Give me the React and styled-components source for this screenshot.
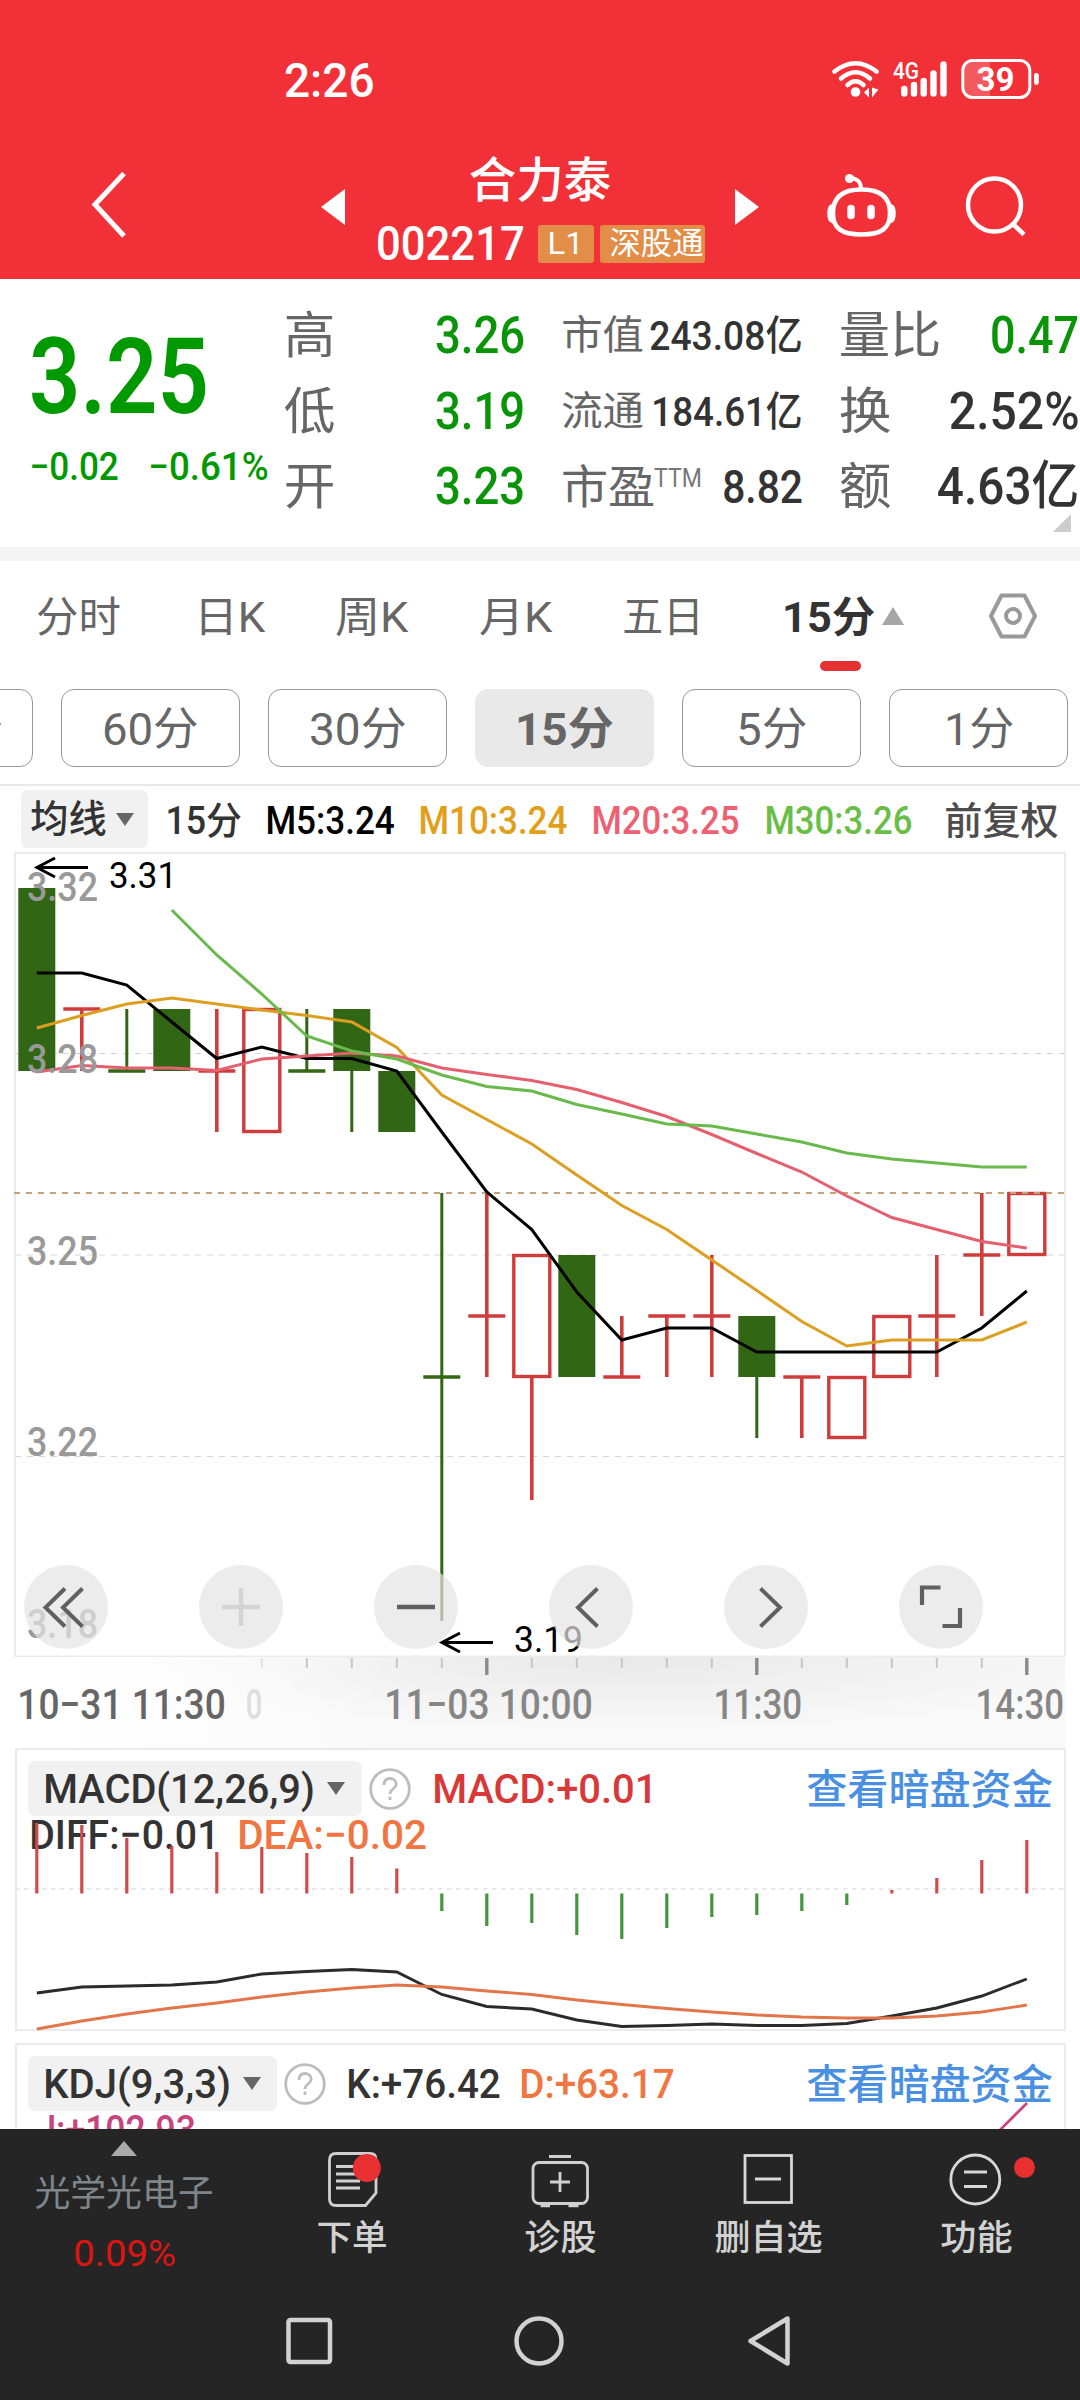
import React, { useLayoutEffect, useRef } from 'react';
import styled, { createGlobalStyle } from 'styled-components';

const GREEN = '#099409';
const INK = '#333';
const BLUE = '#4a90e2';

const STEP = 45;
const FIRST = 36.8;
const cx = (i) => FIRST + STEP * i;

// type, body top, body bottom, high, low
const candles = [
    ['down', 888, 1071, 888, 1071],
    ['up', 1009, 1009, 1009, 1071],
    ['down', 1071, 1071, 1009, 1071],
    ['down', 1009, 1071, 1009, 1071],
    ['up', 1071, 1071, 1009, 1132],
    ['up', 1009, 1132, 1009, 1132],
    ['down', 1071, 1071, 1009, 1071],
    ['down', 1009, 1071, 1009, 1132],
    ['down', 1071, 1132, 1071, 1132],
    ['down', 1377, 1377, 1193, 1621],
    ['up', 1316, 1316, 1193, 1377],
    ['up', 1255, 1377, 1255, 1500],
    ['down', 1255, 1377, 1255, 1377],
    ['up', 1377, 1377, 1316, 1377],
    ['up', 1316, 1316, 1316, 1377],
    ['up', 1316, 1316, 1255, 1377],
    ['down', 1316, 1377, 1316, 1438],
    ['up', 1377, 1377, 1377, 1438],
    ['up', 1377, 1438, 1377, 1438],
    ['up', 1316, 1377, 1316, 1377],
    ['up', 1316, 1316, 1255, 1377],
    ['up', 1255, 1255, 1193, 1316],
    ['up', 1193, 1255, 1193, 1255],
];

const averages = [
    {
        color: '#000',
        start: 0,
        data: [
            973, 973, 985, 1022, 1058.5, 1047, 1058.5, 1058.5, 1071, 1132, 1192, 1229.5, 1292, 1340, 1328, 1328, 1352,
            1352, 1352, 1352, 1352, 1328, 1291,
        ],
    },
    {
        color: '#dc9f22',
        start: 0,
        data: [
            1028, 1015.5, 1004, 998, 1004, 1010, 1015.5, 1022, 1047.5, 1095, 1119.5, 1144, 1175, 1205.5, 1229.5, 1260,
            1290.5, 1321.5, 1346, 1340, 1340, 1340, 1322,
        ],
    },
    {
        color: '#e5606f',
        start: 0,
        data: [
            1072, 1065.5, 1068, 1068, 1070.5, 1059, 1056, 1053, 1056, 1068, 1074.5, 1080.5, 1089.5, 1102.5, 1116.5,
            1134.5, 1153.5, 1172, 1196, 1217.5, 1229.5, 1241.5, 1248,
        ],
    },
    {
        color: '#6ab94c',
        start: 3,
        data: [
            910, 955, 994, 1036, 1051, 1059, 1075, 1086.5, 1091, 1104.5, 1114, 1124, 1126, 1134, 1142, 1153, 1159,
            1163, 1167, 1167,
        ],
    },
];

const macdBars = [
    1823, 1825, 1838, 1846, 1852, 1847, 1853, 1857, 1868.5, 1911, 1926, 1923, 1935, 1939, 1928, 1917, 1915, 1911, 1905,
    1890, 1878, 1860, 1840,
];
const diff = [
    1993, 1987, 1986, 1985, 1982, 1974, 1971.5, 1969.5, 1972, 1994.5, 2006.5, 2009, 2020, 2026.5, 2025.5, 2024,
    2025.5, 2025.5, 2023.5, 2016, 2008, 1996, 1979,
];
const dea = [
    2029, 2021, 2014, 2008, 2003, 1997, 1992, 1988, 1985, 1987, 1991, 1994.5, 2000, 2004.5, 2008.5, 2012, 2015, 2017,
    2018, 2018, 2016, 2012, 2005,
];

const toPoints = (data, start = 0) => data.map((y, i) => `${cx(i + start)},${y}`).join(' ');

// squeezes a line of text so that its ink is exactly `w` wide
function Fit({ w, className, children }) {
    const ref = useRef(null);

    useLayoutEffect(() => {
        const el = ref.current;
        const bearing = parseFloat(getComputedStyle(el).fontSize) * 0.045;
        const scale = w / (el.offsetWidth - bearing * 2);
        el.style.transform = `translateX(${-bearing * scale}px) scaleX(${scale})`;
    }, [w, children]);

    return (
        <FitBox className={className} $w={w}>
            <FitInner ref={ref}>{children}</FitInner>
        </FitBox>
    );
}

export default function App() {
    return (
        <Screen>
            <GlobalStyle />
            <Header />
            <Quote />
            <PeriodTabs />
            <MinuteChips />
            <Legend />
            <CandleChart />
            <TimeAxis />
            <MacdPanel />
            <KdjPanel />
            <BottomBar />
        </Screen>
    );
}

function Header() {
    return (
        <HeaderView>
            <StatusBar>
                <Clock w={87}>2:26</Clock>
                <StatusIcons />
            </StatusBar>
            <NavBar>
                <BackIcon width="36" height="66" viewBox="0 0 36 66">
                    <path d="M33 1.5L4 32.5L33 64" fill="none" stroke="#fff" strokeWidth="5" />
                </BackIcon>
                <PrevIcon width="24" height="36" viewBox="0 0 24 36">
                    <path d="M24 0V36L0 18Z" fill="#fff" />
                </PrevIcon>
                <TitleBlock>
                    <StockName w={138}>合力泰</StockName>
                    <CodeRow>
                        <StockCode w={145}>002217</StockCode>
                        <Badge $w={56} $gap={15}>
                            <BadgeText w={33}>L1</BadgeText>
                        </Badge>
                        <Badge $w={105} $gap={6}>
                            <BadgeText w={91}>深股通</BadgeText>
                        </Badge>
                    </CodeRow>
                </TitleBlock>
                <NextIcon width="24" height="36" viewBox="0 0 24 36">
                    <path d="M0 0V36L24 18Z" fill="#fff" />
                </NextIcon>
                <RobotIcon width="72" height="66" viewBox="825 172 72 66" fill="none" stroke="#fff">
                    <path
                        d="M861.5 189.5c20 0 28.500 8.500 28.500 23.500c0 15-8 21.500-28.500 21.500s-28.500-6.500-28.500-21.500c0-15 8.500-23.500 28.500-23.500z"
                        strokeWidth="4.500"
                    />
                    <path d="M861 189c0-7-3-10-10-11" strokeWidth="4" />
                    <circle cx="849.500" cy="178.500" r="4.500" fill="#fff" stroke="none" />
                    <path d="M851 208.500v7M871 208.500v7" strokeWidth="7.500" strokeLinecap="round" />
                    <path d="M832 205c-5 1-5 16 0 17zM891 205c5 1 5 16 0 17z" fill="#fff" strokeWidth="2" />
                </RobotIcon>
                <SearchIcon width="62" height="62" viewBox="965 175 62 62" fill="none" stroke="#fff" strokeWidth="4.500">
                    <circle cx="994.500" cy="205" r="26.500" />
                    <path d="M1013 224L1024 234.500" />
                </SearchIcon>
            </NavBar>
        </HeaderView>
    );
}

function StatusIcons() {
    return (
        <StatusSvg width="212" height="44" viewBox="830 57 212 44">
            <g fill="none" stroke="#fff" strokeWidth="4.500" strokeLinecap="round">
                <path d="M834.500 71.500Q855.500 55 876.500 71.500" />
                <path d="M841 78.500Q855.500 66 870 78.500" />
                <path d="M847.500 85Q855.500 77.500 863.500 85" />
            </g>
            <circle cx="855.500" cy="92" r="4.800" fill="#fff" />
            <path d="M864 92.500l5-5v10zM872 87.500v10l6.500-8z" fill="#fff" />
            <SvgText x="893" y="79" fontSize="24" fontWeight="500" fill="#fff" textLength="26" lengthAdjust="spacingAndGlyphs">
                4G
            </SvgText>
            <g stroke="#fff" strokeWidth="6.400" strokeLinecap="round">
                <path d="M904.300 89v4.500M914 85v8.500M923.700 81v12.500M933.500 73.500v20M943.500 64.500v29" />
            </g>
            <path d="M974 62h16v34h-16q-10 0-10-10v-14q0-10 10-10z" fill="#fff" opacity="0.2" />
            <rect x="962.800" y="60.500" width="67" height="37" rx="10" fill="none" stroke="#fff" strokeWidth="3" />
            <rect x="1034" y="73" width="4.800" height="12" rx="2.400" fill="#fff" />
            <SvgText x="976.500" y="91" fontSize="34" fontWeight="700" fill="#fff" textLength="38" lengthAdjust="spacingAndGlyphs">
                39
            </SvgText>
        </StatusSvg>
    );
}

function Quote() {
    return (
        <QuoteView>
            <PriceBlock>
                <Price w={172}>3.25</Price>
                <ChangeRow>
                    <Change w={86}>−0.02</Change>
                    <Change w={117}>−0.61%</Change>
                </ChangeRow>
            </PriceBlock>

            <QuoteColumn $w={237}>
                {[
                    ['高', '3.26'],
                    ['低', '3.19'],
                    ['开', '3.23'],
                ].map(([label, value]) => (
                    <QuoteRow key={label}>
                        <QuoteLabel w={47}>{label}</QuoteLabel>
                        <QuoteValue w={86} $color={GREEN}>
                            {value}
                        </QuoteValue>
                    </QuoteRow>
                ))}
            </QuoteColumn>

            <QuoteColumn $w={238} $gap={40}>
                <QuoteRow>
                    <QuoteLabel w={79} $size={40}>
                        市值
                    </QuoteLabel>
                    <QuoteValue w={150} $size={41}>
                        243.08亿
                    </QuoteValue>
                </QuoteRow>
                <QuoteRow>
                    <QuoteLabel w={79} $size={40}>
                        流通
                    </QuoteLabel>
                    <QuoteValue w={148} $size={41}>
                        184.61亿
                    </QuoteValue>
                </QuoteRow>
                <QuoteRow>
                    <QuoteLabel w={90} $size={46}>
                        市盈
                    </QuoteLabel>
                    <Ttm w={46}>TTM</Ttm>
                    <QuoteValue w={77} $size={47}>
                        8.82
                    </QuoteValue>
                </QuoteRow>
            </QuoteColumn>

            <QuoteColumn $w={236} $gap={40}>
                <QuoteRow>
                    <QuoteLabel w={98}>量比</QuoteLabel>
                    <QuoteValue w={85} $color={GREEN}>
                        0.47
                    </QuoteValue>
                </QuoteRow>
                <QuoteRow>
                    <QuoteLabel w={48}>换</QuoteLabel>
                    <QuoteValue w={126}>2.52%</QuoteValue>
                </QuoteRow>
                <QuoteRow>
                    <QuoteLabel w={48}>额</QuoteLabel>
                    <QuoteValue w={138}>4.63亿</QuoteValue>
                </QuoteRow>
            </QuoteColumn>

            <CornerMark />
        </QuoteView>
    );
}

function PeriodTabs() {
    return (
        <TabsView>
            <Tab w={81}>分时</Tab>
            <Tab w={67} $gap={77}>
                日K
            </Tab>
            <Tab w={69} $gap={74}>
                周K
            </Tab>
            <Tab w={69} $gap={75}>
                月K
            </Tab>
            <Tab w={78} $gap={74}>
                五日
            </Tab>
            <ActiveTab>
                <Tab w={89} $active>
                    15分
                </Tab>
                <UpArrow />
                <Indicator />
            </ActiveTab>
            <SettingIcon width="52" height="48" viewBox="0 0 52 48" fill="none" stroke="#999" strokeWidth="4">
                <path d="M14.500 3.500h23L48 24L37.500 44.500h-23L4 24z" strokeLinejoin="round" />
                <circle cx="26" cy="24" r="7" />
            </SettingIcon>
        </TabsView>
    );
}

function MinuteChips() {
    return (
        <ChipsView>
            <Chip>
                <ChipText w={114}>120分</ChipText>
            </Chip>
            <Chip>
                <ChipText w={93}>60分</ChipText>
            </Chip>
            <Chip>
                <ChipText w={94}>30分</ChipText>
            </Chip>
            <Chip $active>
                <ChipText w={95} $active>
                    15分
                </ChipText>
            </Chip>
            <Chip>
                <ChipText w={67}>5分</ChipText>
            </Chip>
            <Chip>
                <ChipText w={66}>1分</ChipText>
            </Chip>
        </ChipsView>
    );
}

function Legend() {
    return (
        <LegendView>
            <LegendSelect>
                <LegendText w={73}>均线</LegendText>
                <DownArrow $gap={11} />
            </LegendSelect>
            <LegendText w={73} $gap={19}>
                15分
            </LegendText>
            <LegendText w={126} $gap={27} $color="#000">
                M5:3.24
            </LegendText>
            <LegendText w={146} $gap={27} $color="#e2a01a">
                M10:3.24
            </LegendText>
            <LegendText w={145} $gap={27} $color="#ee6072">
                M20:3.25
            </LegendText>
            <LegendText w={145} $gap={28} $color="#68be46">
                M30:3.26
            </LegendText>
            <LegendText w={111} $gap={35} $color="#4d4d4d">
                前复权
            </LegendText>
        </LegendView>
    );
}

function Candle({ index, type, top, bottom, high, low }) {
    const x = cx(index);
    const color = type === 'up' ? '#d03c3c' : '#306614';
    const wick = type === 'up' ? 3.6 : 3;

    return (
        <g stroke={color} fill={color}>
            {high < top && <path d={`M${x} ${high}V${top}`} strokeWidth={wick} />}
            {low > bottom && <path d={`M${x} ${bottom}V${low}`} strokeWidth={wick} />}
            {top === bottom && <path d={`M${x - 18.5} ${top}h37`} strokeWidth="3.600" />}
            {top !== bottom && type === 'down' && (
                <rect x={x - 18.5} y={top} width="37" height={bottom - top} stroke="none" />
            )}
            {top !== bottom && type === 'up' && (
                <rect x={x - 18} y={top + 0.5} width="36" height={bottom - top - 1} fill="none" strokeWidth="3.400" />
            )}
        </g>
    );
}

function CandleChart() {
    return (
        <ChartView>
            <ChartSvg width="1080" height="805" viewBox="0 852 1080 805">
                <g stroke="#d6d6d6" strokeDasharray="6 6">
                    <path d="M15 1053.500H1065M15 1456.500H1065" />
                    <path d="M15 1255H1065" stroke="#ebebeb" strokeWidth="2" />
                </g>
                <rect x="15" y="853" width="1050" height="803.500" fill="none" stroke="#ebebeb" strokeWidth="2" />
                {candles.map(([type, top, bottom, high, low], i) => (
                    <Candle key={i} index={i} type={type} top={top} bottom={bottom} high={high} low={low} />
                ))}
                <path d="M14 1193H1065" stroke="#c0a478" strokeWidth="2" strokeDasharray="6 6" />
                {averages.map(({ color, start, data }) => (
                    <polyline key={color} points={toPoints(data, start)} fill="none" stroke={color} strokeWidth="3" />
                ))}
                {[
                    ['3.32', 901],
                    ['3.28', 1073],
                    ['3.25', 1265],
                    ['3.22', 1456],
                    ['3.18', 1638],
                ].map(([label, y]) => (
                    <SvgText
                        key={label}
                        x="27"
                        y={y}
                        fontSize="41"
                        fontWeight="500"
                        fill="#999"
                        textLength="71"
                        lengthAdjust="spacingAndGlyphs"
                    >
                        {label}
                    </SvgText>
                ))}
                <g fill="none" stroke="#000" strokeWidth="3">
                    <path d="M88 867.500H37M55 858L37 867.500L55 877" />
                    <path d="M493 1642.500H442M460 1633L442 1642.500L460 1652" />
                </g>
                <SvgText x="109" y="888" fontSize="36" textLength="68" lengthAdjust="spacingAndGlyphs">
                    3.31
                </SvgText>
                <SvgText x="514" y="1652" fontSize="36" textLength="69" lengthAdjust="spacingAndGlyphs">
                    3.19
                </SvgText>
            </ChartSvg>
            <ToolRow>
                <ToolButton>
                    <path d="M41 23.500L21.500 42.500L41 61.500M58.500 23.500L39 42.500L58.500 61.500" />
                </ToolButton>
                <ToolButton disabled>
                    <path d="M42 23v38M23 42h38" strokeWidth="4.500" />
                </ToolButton>
                <ToolButton>
                    <path d="M23 42h38" strokeWidth="4.500" />
                </ToolButton>
                <ToolButton>
                    <path d="M48.500 23.500L29 42.500L48.500 61.500" />
                </ToolButton>
                <ToolButton>
                    <path d="M36.500 23.500L56 42.500L36.500 61.500" />
                </ToolButton>
                <ToolButton>
                    <path d="M41.500 22.500H23V40M61 43V61H43.500" strokeWidth="4.200" />
                </ToolButton>
            </ToolRow>
        </ChartView>
    );
}

function ToolButton({ disabled, children }) {
    return (
        <ToolCircle>
            <svg width="84" height="84" viewBox="0 0 84 84" fill="none" stroke={disabled ? '#d4d4d4' : '#606060'} strokeWidth="4">
                {children}
            </svg>
        </ToolCircle>
    );
}

function TimeAxis() {
    const ticks = Array.from({ length: 18 }, (_, i) => i + 5);

    return (
        <AxisView>
            <Ticks width="1080" height="22" viewBox="0 1657 1080 22">
                {ticks.map((i) => {
                    const major = i === 10 || i === 16 || i === 22;
                    return (
                        <path
                            key={i}
                            d={`M${cx(i)} 1658V${major ? 1675 : 1668}`}
                            stroke={major ? '#8a8a8a' : i === 5 ? '#e2e2e2' : '#c6c6c6'}
                            strokeWidth={major ? 3.4 : 2}
                        />
                    );
                })}
            </Ticks>
            <AxisLabels>
                <AxisText w={205} $color="#666">
                    10−31 11:30
                </AxisText>
                <AxisText w={14} $gap={23} $color="#dedede">
                    0
                </AxisText>
                <AxisText w={205} $gap={125}>
                    11−03 10:00
                </AxisText>
                <AxisText w={86} $gap={124}>
                    11:30
                </AxisText>
                <AxisText w={86} $gap={176}>
                    14:30
                </AxisText>
            </AxisLabels>
        </AxisView>
    );
}

function HelpIcon() {
    return (
        <HelpSvg width="42" height="42" viewBox="0 0 42 42" fill="none" stroke="#bdbdbd" strokeWidth="2.800">
            <circle cx="21" cy="21" r="19.300" />
            <path d="M15 17c0-4.500 2.500-6.500 6-6.500s6.200 2.300 6.200 5.700c0 4.600-6.200 4.600-6.200 9.800" />
            <path d="M21 28.500v3.500" />
        </HelpSvg>
    );
}

function MacdPanel() {
    return (
        <Panel $h={283}>
            <PanelHead>
                <PanelSelect $w={334}>
                    <PanelText w={268}>MACD(12,26,9)</PanelText>
                    <DownArrow $gap={14} />
                </PanelSelect>
                <HelpIcon />
                <PanelText w={222} $gap={23} $color="#d93838">
                    MACD:+0.01
                </PanelText>
                <FundLink w={243}>查看暗盘资金</FundLink>
            </PanelHead>
            <PanelSecond>
                <PanelText w={187}>DIFF:−0.01</PanelText>
                <PanelText w={186} $gap={21} $color="#f07540">
                    DEA:−0.02
                </PanelText>
            </PanelSecond>
            <PanelSvg width="1050" height="283" viewBox="15 1748 1050 283">
                <path d="M15 1889H1065" stroke="#e9e9e9" strokeWidth="2" strokeDasharray="4.500 4.500" />
                {macdBars.map((y, i) => (
                    <path
                        key={i}
                        d={`M${cx(i)} 1893.500V${y}`}
                        stroke={y < 1893 ? '#cf4a4a' : '#43963a'}
                        strokeWidth="3.200"
                    />
                ))}
                <polyline points={toPoints(diff)} fill="none" stroke="#2b2b2b" strokeWidth="2.900" />
                <polyline points={toPoints(dea)} fill="none" stroke="#e2754a" strokeWidth="2.900" />
            </PanelSvg>
        </Panel>
    );
}

function KdjPanel() {
    return (
        <Clip>
            <Panel $h={120}>
                <PanelHead>
                    <PanelSelect $w={249}>
                        <PanelText w={184}>KDJ(9,3,3)</PanelText>
                        <DownArrow $gap={14} />
                    </PanelSelect>
                    <HelpIcon />
                    <PanelText w={151} $gap={22}>
                        K:+76.42
                    </PanelText>
                    <PanelText w={152} $gap={22} $color="#f07540">
                        D:+63.17
                    </PanelText>
                    <FundLink w={243}>查看暗盘资金</FundLink>
                </PanelHead>
                <PanelSecond $pad={21}>
                    <PanelText w={156} $color="#c8447e">
                        J:+102.93
                    </PanelText>
                </PanelSecond>
                <PanelSvg width="1050" height="120" viewBox="15 2043 1050 120">
                    <path d="M1027 2103L997 2133" stroke="#c8447e" strokeWidth="2.700" />
                </PanelSvg>
            </Panel>
        </Clip>
    );
}

function BottomBar() {
    return (
        <BottomView>
            <ActionRow>
                <Sector>
                    <SectorArrow />
                    <SectorName w={176}>光学光电子</SectorName>
                    <SectorChange w={99}>0.09%</SectorChange>
                </Sector>
                <Action>
                    <svg width="60" height="60" viewBox="322 2150 60 60" fill="none" stroke="#d0d0d0" strokeWidth="2.800">
                        <path d="M336 2153.500h34q6 0 6 6V2193L365.500 2205.500H336q-6.500 0-6.500-6.500V2160q0-6.500 6.500-6.500z" />
                        <path d="M336 2166.500h26M336 2174h26M336 2181h24M336 2188h24" strokeWidth="3" />
                        <circle cx="366.800" cy="2168" r="14" fill="#e93030" stroke="none" />
                    </svg>
                    <ActionText w={68}>下单</ActionText>
                </Action>
                <Action>
                    <svg width="60" height="60" viewBox="529.500 2150 60 60" fill="none" stroke="#d0d0d0" strokeWidth="2.800">
                        <rect x="532.500" y="2162.500" width="54.500" height="41" rx="6" />
                        <path d="M548.500 2156.500h22M559.500 2172v20M549.500 2182h20" />
                        <path d="M540 2205.500h9.500M568 2205.500h10" strokeWidth="3.500" />
                    </svg>
                    <ActionText w={69}>诊股</ActionText>
                </Action>
                <Action>
                    <svg width="60" height="60" viewBox="737 2150 60 60" fill="none" stroke="#d8d8d8" strokeWidth="2.800">
                        <rect x="744" y="2155.500" width="46.500" height="47" />
                        <path d="M754 2179h26" strokeWidth="3" />
                    </svg>
                    <ActionText w={105}>删自选</ActionText>
                </Action>
                <Action>
                    <svg width="60" height="60" viewBox="946 2150 60 60" fill="none" stroke="#d8d8d8" strokeWidth="2.800">
                        <circle cx="975.300" cy="2179.500" r="24.500" />
                        <path d="M964 2172h23M964 2186.500h23" strokeWidth="3" />
                    </svg>
                    <ActionText w={69}>功能</ActionText>
                    <RedDot />
                </Action>
            </ActionRow>
            <SystemNav>
                <svg width="48" height="52" viewBox="285 2315 48 52" fill="none" stroke="#d2d2d2" strokeWidth="4.500">
                    <rect x="288.500" y="2320" width="41.500" height="42" rx="2" />
                </svg>
                <svg width="52" height="52" viewBox="514 2315 52 52" fill="none" stroke="#d2d2d2" strokeWidth="4.500">
                    <circle cx="540" cy="2341" r="22.500" />
                </svg>
                <svg width="48" height="54" viewBox="745 2314 48 54" fill="none" stroke="#d2d2d2" strokeWidth="4.500">
                    <path d="M787.500 2318.500V2363.500L750.500 2341z" strokeLinejoin="round" />
                </svg>
            </SystemNav>
        </BottomView>
    );
}

const GlobalStyle = createGlobalStyle`
    * {
        box-sizing: border-box;
    }

    body {
        margin: 0;
        background-color: #fff;
        font-family: Roboto, 'Noto Sans CJK SC', sans-serif;
    }

    svg {
        display: block;
        flex: none;
    }
`;

const FitBox = styled.span`
    display: block;
    flex: none;
    width: ${({ $w }) => $w}px;
    white-space: nowrap;
`;

const FitInner = styled.span`
    display: inline-block;
    transform-origin: left center;
    vertical-align: top;
`;

const Screen = styled.div`
    width: 1080px;
    height: 2400px;
    overflow: hidden;

    display: flex;
    flex-direction: column;
`;

const HeaderView = styled.header`
    height: 279px;
    flex: none;
    background-color: #f13038;
    color: #fff;
`;

const StatusBar = styled.div`
    height: 150px;
    padding: 50px 38px 0 286px;

    display: flex;
    justify-content: space-between;
`;

const Clock = styled(Fit)`
    font-size: 48px;
    font-weight: 500;
    line-height: 62px;
`;

const StatusSvg = styled.svg`
    margin-top: 7px;
`;

const NavBar = styled.div`
    display: flex;
    align-items: flex-start;
    padding-left: 91px;
`;

const BackIcon = styled.svg`
    margin-top: 22px;
`;

const PrevIcon = styled.svg`
    margin-top: 39px;
    margin-left: 194px;
`;

const NextIcon = styled.svg`
    margin-top: 39px;
    margin-left: 30px;
`;

const RobotIcon = styled.svg`
    margin-top: 22px;
    margin-left: 66px;
`;

const SearchIcon = styled.svg`
    margin-top: 25px;
    margin-left: 68px;
`;

const TitleBlock = styled.div`
    margin-left: 32px;
    width: 328px;
`;

const StockName = styled(Fit)`
    margin-left: 94px;
    font-size: 48px;
    font-weight: 500;
    line-height: 62px;
`;

const CodeRow = styled.div`
    height: 38px;
    margin-top: 13px;

    display: flex;
    align-items: center;
`;

const StockCode = styled(Fit)`
    margin-left: 1px;
    font-size: 48px;
    line-height: 38px;
    font-weight: 500;
`;

const Badge = styled.div`
    width: ${({ $w }) => $w}px;
    height: 38px;
    margin-left: ${({ $gap }) => $gap}px;
    padding-left: 11px;
    border-radius: 3px;
    background-color: #e28e49;
`;

const BadgeText = styled(Fit)`
    font-size: 31px;
    line-height: 37px;
`;

const QuoteView = styled.section`
    height: 282px;
    flex: none;
    padding-left: 31px;
    border-bottom: 14px solid #f4f4f4;

    display: flex;
    position: relative;
`;

const PriceBlock = styled.div`
    width: 255px;
    padding-top: 41px;
    color: #009900;
`;

const Price = styled(Fit)`
    margin-left: 2px;
    font-size: 105px;
    font-weight: 600;
    line-height: 115px;
`;

const ChangeRow = styled.div`
    margin-top: 11px;
    display: flex;
    gap: 33px;
`;

const Change = styled(Fit)`
    font-size: 39px;
    font-weight: 500;
    line-height: 42px;
`;

const QuoteColumn = styled.div`
    width: ${({ $w }) => $w}px;
    margin-left: ${({ $gap = 0 }) => $gap}px;
    padding-top: 19px;
`;

const QuoteRow = styled.div`
    height: 75.5px;
    display: flex;
    justify-content: space-between;
`;

const QuoteLabel = styled(Fit)`
    font-size: ${({ $size = 50 }) => $size}px;
    line-height: 76px;
    color: #666;
`;

const QuoteValue = styled(Fit)`
    font-size: ${({ $size = 52 }) => $size}px;
    font-weight: 500;
    line-height: 76px;
    color: ${({ $color = INK }) => $color};
`;

const Ttm = styled(Fit)`
    margin-right: 21px;
    font-size: 25px;
    font-weight: 400;
    line-height: 60px;
    color: #777;
`;

const CornerMark = styled.i`
    position: absolute;
    right: 9px;
    bottom: 15px;
    border-left: 18px solid transparent;
    border-bottom: 18px solid #ccc;
`;

const TabsView = styled.nav`
    height: 128px;
    flex: none;
    padding-left: 38px;
    display: flex;
`;

const Tab = styled(Fit)`
    margin-left: ${({ $gap = 0 }) => $gap}px;
    font-size: 42px;
    font-weight: ${({ $active }) => ($active ? 700 : 400)};
    line-height: 114px;
    color: ${({ $active }) => ($active ? INK : '#666')};
`;

const ActiveTab = styled.div`
    width: 121px;
    margin-left: 82px;
    display: flex;
    position: relative;
`;

const UpArrow = styled.i`
    width: 0;
    height: 0;
    margin: 46px 0 0 9px;
    border: 11px solid transparent;
    border-top: 0;
    border-bottom: 18px solid #a6a6a6;
`;

const Indicator = styled.i`
    position: absolute;
    left: 36px;
    bottom: 18px;
    width: 41px;
    height: 10px;
    border-radius: 5px;
    background-color: #e63133;
`;

const SettingIcon = styled.svg`
    margin: 31px 0 0 82px;
`;

const ChipsView = styled.div`
    height: 97px;
    flex: none;
    padding-right: 12px;
    border-bottom: 2px solid #e8e8e8;

    display: flex;
    justify-content: flex-end;
    gap: 28px;
`;

const Chip = styled.div`
    width: 179px;
    height: 78px;
    flex: none;
    border: 1.5px solid ${({ $active }) => ($active ? '#e9e9e9' : '#999')};
    border-radius: 13px;
    background-color: ${({ $active }) => ($active ? '#e9e9e9' : '#fff')};

    display: flex;
    align-items: center;
    justify-content: center;
`;

const ChipText = styled(Fit)`
    padding-top: 3px;
    font-size: 45px;
    font-weight: ${({ $active }) => ($active ? 700 : 400)};
    line-height: 73px;
    color: #666;
`;

const LegendView = styled.div`
    height: 66px;
    flex: none;
    padding: 4px 0 0 21px;
    display: flex;
`;

const LegendSelect = styled.div`
    width: 127px;
    height: 58px;
    padding-left: 11px;
    border-radius: 7px;
    background-color: #f1f1f1;

    display: flex;
    align-items: center;
`;

const LegendText = styled(Fit)`
    margin-left: ${({ $gap = 0 }) => $gap}px;
    font-size: 38px;
    font-weight: 500;
    line-height: 62px;
    color: ${({ $color = INK }) => $color};
`;

const DownArrow = styled.i`
    width: 0;
    height: 0;
    margin-left: ${({ $gap }) => $gap}px;
    border: 9.5px solid transparent;
    border-bottom: 0;
    border-top: 13px solid #666;
`;

const ChartView = styled.div`
    height: 805px;
    flex: none;
    position: relative;
`;

const ChartSvg = styled.svg`
    position: absolute;
    top: 0;
    left: 0;
`;

const SvgText = styled.text`
    font-family: Roboto, sans-serif;
`;

const ToolRow = styled.div`
    position: absolute;
    left: 23.500px;
    bottom: 8px;
    display: flex;
    gap: 91px;
`;

const ToolCircle = styled.div`
    width: 84px;
    height: 84px;
    border-radius: 50%;
    background-color: rgba(228, 228, 228, 0.7);
`;

const AxisView = styled.div`
    width: 1065px;
    height: 91px;
    flex: none;
    background: linear-gradient(to right, #fff 50px, rgba(255, 255, 255, 0) 420px),
        radial-gradient(ellipse 520px 75px at 620px 0, #e9e9e9, #f9f9f9);
`;

const Ticks = styled.svg`
    width: 1080px;
`;

const AxisLabels = styled.div`
    padding-left: 19px;
    display: flex;
`;

const AxisText = styled(Fit)`
    margin-left: ${({ $gap = 0 }) => $gap}px;
    font-size: 42px;
    font-weight: 500;
    line-height: 52px;
    color: ${({ $color = '#868686' }) => $color};
`;

const Panel = styled.section`
    height: ${({ $h }) => $h}px;
    width: 1051px;
    margin-left: 14.500px;
    flex: none;
    border: 2px solid #ebebeb;
    position: relative;
`;

const Clip = styled.div`
    height: 86px;
    margin-top: 12px;
    flex: none;
    overflow: hidden;
`;

const PanelHead = styled.div`
    padding: 11px 13px 0 11px;
    display: flex;
    align-items: center;
`;

const PanelSelect = styled.div`
    width: ${({ $w }) => $w}px;
    height: 55px;
    flex: none;
    padding-left: 17px;
    border-radius: 7px;
    background-color: #f1f1f1;

    display: flex;
    align-items: center;
`;

const PanelText = styled(Fit)`
    margin-left: ${({ $gap = 0 }) => $gap}px;
    padding-top: 1px;
    font-size: 41px;
    font-weight: 500;
    line-height: 54px;
    color: ${({ $color = INK }) => $color};
`;

const PanelSecond = styled.div`
    height: 40px;
    margin-top: -9px;
    padding-left: ${({ $pad = 14 }) => $pad}px;
    display: flex;
`;

const FundLink = styled(Fit)`
    margin-left: auto;
    padding-top: 3px;
    font-size: 41px;
    font-weight: 500;
    line-height: 52px;
    color: ${BLUE};
`;

const HelpSvg = styled.svg`
    margin-left: 7px;
`;

const PanelSvg = styled.svg`
    position: absolute;
    top: -2px;
    left: -1.500px;
`;

const BottomView = styled.footer`
    height: 271px;
    flex: none;
    background-color: #252525;
`;

const ActionRow = styled.div`
    height: 153px;
    display: flex;
`;

const Sector = styled.div`
    width: 248px;

    display: flex;
    flex-direction: column;
    align-items: center;
`;

const SectorArrow = styled.i`
    width: 0;
    height: 0;
    margin-top: 12px;
    border: 13px solid transparent;
    border-top: 0;
    border-bottom: 15px solid #aaa;
`;

const SectorName = styled(Fit)`
    margin-top: 11px;
    font-size: 36px;
    line-height: 54px;
    color: #7f868b;
`;

const SectorChange = styled(Fit)`
    margin-top: 8px;
    font-size: 37px;
    line-height: 50px;
    color: #dd1414;
`;

const Action = styled.div`
    width: 208px;
    padding-top: 21px;

    display: flex;
    flex-direction: column;
    align-items: center;
    position: relative;
`;

const ActionText = styled(Fit)`
    padding-top: 1px;
    font-size: 35px;
    font-weight: 500;
    line-height: 56px;
    color: #d2d2d2;
`;

const RedDot = styled.i`
    position: absolute;
    top: 28px;
    right: 45px;
    width: 21px;
    height: 21px;
    border-radius: 50%;
    background-color: #e93030;
`;

const SystemNav = styled.div`
    padding: 32px 287px 0 285px;
    display: flex;
    align-items: center;
    justify-content: space-between;
`;
